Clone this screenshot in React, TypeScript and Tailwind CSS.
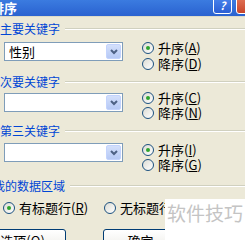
import React from "react";

const font = { fontFamily: '"Noto Sans CJK SC", "Liberation Sans", sans-serif' };

function Radio({ checked, label, k }: { checked?: boolean; label: string; k: string }) {
  return (
    <div className="flex items-center h-[15px] gap-[4px]">
      <div className="w-[12px] h-[12px] rounded-full border border-[#1c5180] bg-gradient-to-br from-[#dcdcd4] to-white flex items-center justify-center shrink-0">
        {checked && <div className="w-[4px] h-[4px] rounded-full bg-[#2ea42e]" />}
      </div>
      <span className="text-[13px] leading-[15px] text-black whitespace-nowrap">
        {label}({<span className="underline">{k}</span>})
      </span>
    </div>
  );
}

function Combo({ value }: { value?: string }) {
  return (
    <div className="w-[119px] h-[19px] border border-[#7f9db9] bg-white flex items-center justify-between pl-[4px] pr-[1px]">
      <span className="text-[13px] leading-[15px] text-black">{value}</span>
      <div className="w-[15px] h-[15px] rounded-[2px] bg-gradient-to-b from-[#d4e0fb] to-[#b6c9f5] border border-[#c3d3fd] flex items-center justify-center">
        <svg width="8" height="6" viewBox="0 0 8 6">
          <path d="M1 1 L4 4 L7 1" stroke="#4d6185" strokeWidth="2" fill="none" />
        </svg>
      </div>
    </div>
  );
}

function GroupLabel({ text, className }: { text: string; className?: string }) {
  return (
    <div className={"flex items-center h-[14px] " + (className || "")}>
      <span className="text-[12px] leading-[14px] text-[#0046d5] whitespace-nowrap">{text}</span>
      <div className="flex-1 ml-[5px] flex flex-col">
        <div className="h-px bg-[#d0d0bf]" />
        <div className="h-px bg-white" />
      </div>
    </div>
  );
}

export default function App() {
  return (
    <div className="w-[245px] h-[240px] overflow-hidden bg-[#ece9d8] relative" style={font}>
      {/* title bar */}
      <div className="h-[16px] bg-gradient-to-b from-[#3b7be0] to-[#2a62d0] flex items-center relative">
        <span className="ml-[-9px] text-white font-bold text-[13px] leading-[14px]">排序</span>
        <div className="absolute left-[213px] top-[-4px] w-[19px] h-[18px] rounded-[3px] border border-white bg-gradient-to-b from-[#4a86ee] to-[#2b5ed4] flex items-center justify-center">
          <span className="text-white font-bold text-[11px] leading-none italic">?</span>
        </div>
        <div className="absolute left-[236px] top-[-4px] w-[19px] h-[18px] rounded-[3px] border border-white bg-gradient-to-b from-[#e3765a] to-[#c8452a]" />
      </div>
      <div className="h-px bg-[#dcdac9]" />

      <div className="pl-[0px]">
        <GroupLabel text="主要关键字" className="mt-[5px]" />
        <div className="flex mt-[4px] h-[32px]">
          <div className="ml-[4px] mt-[2px]">
            <Combo value="性别" />
          </div>
          <div className="ml-[19px] flex flex-col gap-[1px]">
            <Radio checked label="升序" k="A" />
            <Radio label="降序" k="D" />
          </div>
        </div>

        <GroupLabel text="次要关键字" className="mt-[3px]" />
        <div className="flex mt-[1px] h-[32px]">
          <div className="ml-[4px] mt-[3px]">
            <Combo />
          </div>
          <div className="ml-[19px] flex flex-col gap-[0px]">
            <Radio checked label="升序" k="C" />
            <Radio label="降序" k="N" />
          </div>
        </div>

        <GroupLabel text="第三关键字" className="mt-[2px]" />
        <div className="flex mt-[4px] h-[32px]">
          <div className="ml-[4px] mt-[1px]">
            <Combo />
          </div>
          <div className="ml-[19px] flex flex-col gap-[0px]">
            <Radio checked label="升序" k="I" />
            <Radio label="降序" k="G" />
          </div>
        </div>

        <div className="ml-[-7px] mt-[5px]">
          <GroupLabel text="我的数据区域" />
        </div>
        <div className="flex mt-[7px] ml-[3px] gap-[16px]">
          <Radio checked label="有标题行" k="R" />
          <Radio label="无标题行" k="W" />
        </div>

        <div className="flex mt-[14px]">
          <div className="ml-[-10px] w-[76px] h-[23px] rounded-[3px] border border-[#003c74] bg-gradient-to-b from-white to-[#ecebe6] flex items-center justify-center">
            <span className="text-[13px] leading-[15px] text-black">选项(<span className="underline">O</span>)...</span>
          </div>
          <div className="ml-[37px] w-[75px] h-[23px] rounded-[3px] border border-[#003c74] bg-gradient-to-b from-white to-[#ecebe6] flex items-center justify-center">
            <span className="text-[13px] leading-[15px] text-black">确定</span>
          </div>
        </div>
      </div>

      {/* watermark */}
      <div className="absolute left-[165px] top-[199px] w-[80px] h-[41px] bg-white flex items-start justify-center pt-[2px]">
        <span className="text-[19px] leading-[24px] text-[#c4c4c4] whitespace-nowrap">软件技巧</span>
      </div>
    </div>
  );
}
